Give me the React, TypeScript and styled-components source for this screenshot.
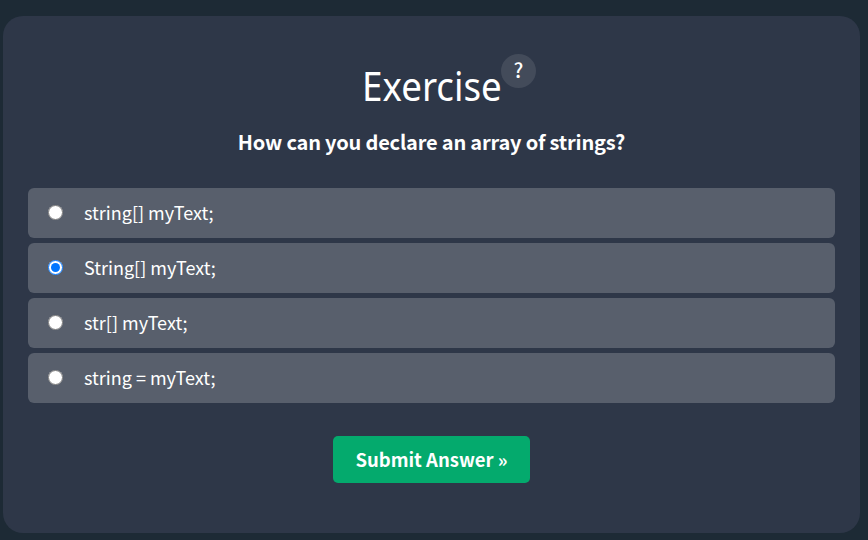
import React, { useState } from 'react';
import styled, { createGlobalStyle } from 'styled-components';

const Global = createGlobalStyle`
  * { box-sizing: border-box; }
  body {
    margin: 0;
    background: #1d2a35;
    color: #fff;
    font-family: 'Source Sans Pro', 'Noto Sans CJK SC', sans-serif;
  }
`;

const Page = styled.main`
  height: 540px;
  padding: 16px 8px 7px 3px;
`;

const Card = styled.form`
  display: flex;
  flex-direction: column;
  align-items: center;
  height: 517px;
  padding: 38px 25px 0;
  border-radius: 20px;
  background: #2e3748;
`;

const Heading = styled.header`
  display: flex;
  align-items: flex-start;
  height: 64px;
  margin-left: 35px;
`;

const Title = styled.h2`
  width: 138px;
  margin: 4px 0 0;
  font: 400 39.5px/56px 'Segoe UI', 'Noto Sans', sans-serif;
  text-indent: -1px;
  white-space: nowrap;
  transform: scaleX(0.93);
  transform-origin: left;
`;

const Help = styled.span`
  width: 35px;
  height: 34px;
  border-radius: 50%;
  background: #434b5a;
  font-size: 20px;
  font-weight: 500;
  line-height: 32px;
  text-align: center;
  text-indent: 1px;
`;

const Question = styled.p`
  height: 70px;
  margin: 8px 0 0;
  font-size: 20px;
  font-weight: 700;
  line-height: 32px;
  letter-spacing: -0.19px;
  white-space: nowrap;
`;

const Options = styled.div`
  display: grid;
  gap: 5px;
  width: 100%;
  margin-top: -8px;
`;

const Option = styled.label`
  display: flex;
  align-items: center;
  height: 50px;
  padding-left: 20px;
  border-radius: 6px;
  background: #585f6c;
`;

const Radio = styled.input`
  width: 15px;
  height: 15px;
  margin: 0 21px 2px 0;
`;

const Answer = styled.span`
  margin-bottom: 2px;
  font-size: 18px;
  line-height: 30px;
`;

const Submit = styled.button`
  width: 197px;
  height: 47px;
  margin-top: 33px;
  padding: 0;
  border: 0;
  border-radius: 5px;
  background: #04aa6d;
  color: #fff;
  font: inherit;
  font-size: 18.5px;
  font-weight: 700;
  line-height: 47px;
`;

const answers = ['string[] myText;', 'String[] myText;', 'str[] myText;', 'string = myText;'];

export default function App() {
  const [selected, setSelected] = useState(1);
  return (
    <>
      <Global />
      <Page>
        <Card onSubmit={(e) => e.preventDefault()}>
          <Heading>
            <Title>Exercise</Title>
            <Help>?</Help>
          </Heading>
          <Question>How can you declare an array of strings?</Question>
          <Options>
            {answers.map((answer, i) => (
              <Option key={answer}>
                <Radio type="radio" name="answer" checked={selected === i} onChange={() => setSelected(i)} />
                <Answer>{answer}</Answer>
              </Option>
            ))}
          </Options>
          <Submit type="submit">Submit Answer »</Submit>
        </Card>
      </Page>
    </>
  );
}
